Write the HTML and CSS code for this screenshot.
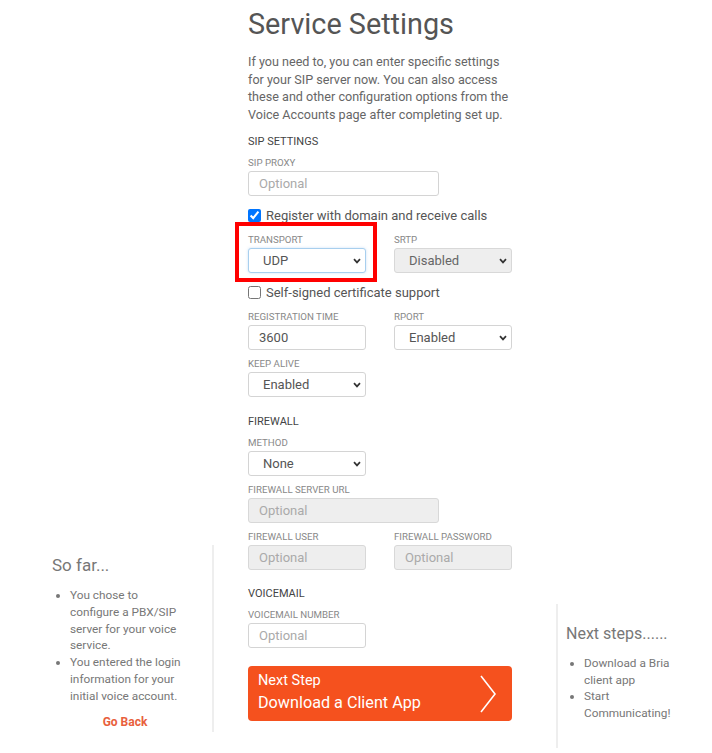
FILE: index.html
```html
<!DOCTYPE html>
<html lang="en">
<head>
<meta charset="utf-8">
<title>Service Settings</title>
<link rel="stylesheet" href="styles.css">
</head>
<body>
<div class="page">
  <aside class="side side-left">
    <h2 class="side-title">So far...</h2>
    <ul class="side-list">
      <li>You chose to configure a PBX/SIP server for your voice service.</li>
      <li>You entered the login information for your initial voice account.</li>
    </ul>
    <a class="go-back" href="#">Go Back</a>
  </aside>

  <main class="main">
    <h1 class="title">Service Settings</h1>
    <p class="intro">If you need to, you can enter specific settings for your SIP server now. You can also access these and other configuration options from the Voice Accounts page after completing set up.</p>

    <div class="form">
      <h3 class="section">SIP SETTINGS</h3>
      <div class="field">
        <label class="label">SIP PROXY</label>
        <input class="control wide" type="text" placeholder="Optional">
      </div>
      <label class="check"><input type="checkbox" checked><span>Register with domain and receive calls</span></label>
      <div class="row2 annotated">
        <div class="field">
          <label class="label">TRANSPORT</label>
          <div class="select-wrap">
            <select class="control sel focused"><option>UDP</option></select>
            <svg class="chev" width="8" height="6" viewBox="0 0 8 6"><path d="M1 1.2 L4 4.4 L7 1.2" fill="none" stroke="#333" stroke-width="1.7"/></svg>
          </div>
        </div>
        <div class="field">
          <label class="label">SRTP</label>
          <div class="select-wrap">
            <select class="control sel" disabled><option>Disabled</option></select>
            <svg class="chev" width="8" height="6" viewBox="0 0 8 6"><path d="M1 1.2 L4 4.4 L7 1.2" fill="none" stroke="#333" stroke-width="1.7"/></svg>
          </div>
        </div>
        <div class="highlight"></div>
      </div>
      <label class="check"><input type="checkbox"><span>Self-signed certificate support</span></label>
      <div class="row2">
        <div class="field">
          <label class="label">REGISTRATION TIME</label>
          <input class="control" type="text" value="3600">
        </div>
        <div class="field">
          <label class="label">RPORT</label>
          <div class="select-wrap">
            <select class="control sel"><option>Enabled</option></select>
            <svg class="chev" width="8" height="6" viewBox="0 0 8 6"><path d="M1 1.2 L4 4.4 L7 1.2" fill="none" stroke="#333" stroke-width="1.7"/></svg>
          </div>
        </div>
      </div>
      <div class="field">
        <label class="label">KEEP ALIVE</label>
        <div class="select-wrap">
          <select class="control sel"><option>Enabled</option></select>
          <svg class="chev" width="8" height="6" viewBox="0 0 8 6"><path d="M1 1.2 L4 4.4 L7 1.2" fill="none" stroke="#333" stroke-width="1.7"/></svg>
        </div>
      </div>

      <h3 class="section spaced">FIREWALL</h3>
      <div class="field">
        <label class="label">METHOD</label>
        <div class="select-wrap">
          <select class="control sel"><option>None</option></select>
          <svg class="chev" width="8" height="6" viewBox="0 0 8 6"><path d="M1 1.2 L4 4.4 L7 1.2" fill="none" stroke="#333" stroke-width="1.7"/></svg>
        </div>
      </div>
      <div class="field">
        <label class="label">FIREWALL SERVER URL</label>
        <input class="control wide" type="text" placeholder="Optional" disabled>
      </div>
      <div class="row2">
        <div class="field">
          <label class="label">FIREWALL USER</label>
          <input class="control" type="text" placeholder="Optional" disabled>
        </div>
        <div class="field">
          <label class="label">FIREWALL PASSWORD</label>
          <input class="control" type="text" placeholder="Optional" disabled>
        </div>
      </div>

      <h3 class="section spaced vm">VOICEMAIL</h3>
      <div class="field">
        <label class="label">VOICEMAIL NUMBER</label>
        <input class="control" type="text" placeholder="Optional">
      </div>

      <a class="next-btn" href="#">
        <span class="next-text">
          <span class="next-small">Next Step</span>
          <span class="next-big">Download a Client App</span>
        </span>
        <svg class="next-arrow" width="18" height="38" viewBox="0 0 18 38"><path d="M2 1 L16 19 L2 37" fill="none" stroke="#fff" stroke-width="1.6"/></svg>
      </a>
    </div>
  </main>

  <aside class="side side-right">
    <h2 class="side-title">Next steps......</h2>
    <ul class="side-list">
      <li>Download a Bria client app</li>
      <li>Start Communicating!</li>
    </ul>
  </aside>
</div>
</body>
</html>
```

FILE: styles.css
```css
* { box-sizing: border-box; }
html, body { margin: 0; padding: 0; background: #fff; }
body {
  font-family: Roboto, "Liberation Sans", Arial, sans-serif;
  color: #555;
  width: 712px;
  height: 753px;
  overflow: hidden;
}
.page {
  display: grid;
  grid-template-columns: 214px 342px 1fr;
  align-items: start;
}

/* sidebars */
.side { display: flex; flex-direction: column; }
.side-left {
  margin-top: 545px;
  height: 187px;
  border-right: 2px solid #eeeeee;
  padding: 9px 28px 0 52px;
}
.side-right {
  margin-top: 604px;
  height: 144px;
  border-left: 2px solid #eeeeee;
  padding: 19px 0 0 8px;
}
.side-title {
  margin: 0;
  font-weight: 400;
  font-size: 17px;
  line-height: 22px;
  color: #777;
}
.side-right .side-title { font-size: 16px; }
.side-list {
  margin: 11px 0 0;
  padding-left: 18px;
  font-size: 11.8px;
  line-height: 16.8px;
  color: #777;
}
.side-right .side-list { width: 110px; margin-top: 10px; line-height: 16.6px; }
.go-back {
  margin-top: 9px;
  align-self: center;
  margin-left: 14px;
  font-size: 12px;
  font-weight: 700;
  color: #e8603c;
  text-decoration: none;
  line-height: 16px;
}

/* main column */
.main {
  padding: 0 0 0 34px;
  position: relative;
}
.title {
  margin: 6px 0 0;
  font-size: 28.8px;
  line-height: 36px;
  font-weight: 400;
  color: #555;
}
.intro {
  margin: 11px 0 0;
  width: 270px;
  font-size: 12.6px;
  line-height: 17.5px;
  color: #666;
}
.form {
  margin-top: 12px;
  width: 264px;
  display: flex;
  flex-direction: column;
  gap: 8px;
}
.section {
  margin: 0;
  font-size: 11px;
  line-height: 14px;
  font-weight: 400;
  color: #444;
}
.section.spaced { margin-top: 10px; }
.section.vm { margin-top: 9px; }
.field { display: flex; flex-direction: column; align-items: flex-start; }
.label {
  font-size: 9.7px;
  line-height: 12px;
  color: #888;
  margin-bottom: 2px;
}
.control {
  width: 118px;
  height: 25px;
  border: 1px solid #d4d4d4;
  border-radius: 3px;
  background: #fff;
  font-family: Roboto, "Liberation Sans", Arial, sans-serif;
  font-size: 13px;
  color: #555;
  padding: 0 10px;
  margin: 0;
  outline: none;
}
.control.wide { width: 191px; }
.control::placeholder { color: #aaa; }
.control:disabled { background: #eeeeee; border-color: #d8d8d8; }
.select-wrap { position: relative; display: block; }
.sel {
  -webkit-appearance: none;
  appearance: none;
  padding: 0 20px 0 14px;
  display: block;
}
.sel:disabled { color: #666; opacity: 1; }
.chev {
  position: absolute;
  right: 5px;
  top: 10px;
  pointer-events: none;
}
.focused {
  border-color: #a8cfee;
  box-shadow: 0 0 3px rgba(110, 170, 225, 0.35);
}
.check {
  display: flex;
  align-items: center;
  gap: 5px;
  height: 18px;
  margin: 2px 0 2px;
  font-size: 13px;
  color: #555;
}
.check input { margin: 0; width: 13px; height: 13px; }
.row2 { display: flex; gap: 28px; }
.annotated { position: relative; }
.highlight {
  position: absolute;
  left: -13px;
  top: -12px;
  width: 142px;
  height: 60px;
  border: 4px solid #ff0000;
  pointer-events: none;
}
.next-btn {
  margin-top: 10px;
  height: 55px;
  background: #f5511e;
  border-radius: 4px;
  display: flex;
  align-items: center;
  justify-content: space-between;
  padding: 0 15px 0 10px;
  text-decoration: none;
  color: #fff;
}
.next-text { display: flex; flex-direction: column; }
.next-small { font-size: 14.5px; line-height: 16px; }
.next-big { font-size: 16.2px; line-height: 22px; margin-top: 3px; }
.next-arrow { display: block; }
```
